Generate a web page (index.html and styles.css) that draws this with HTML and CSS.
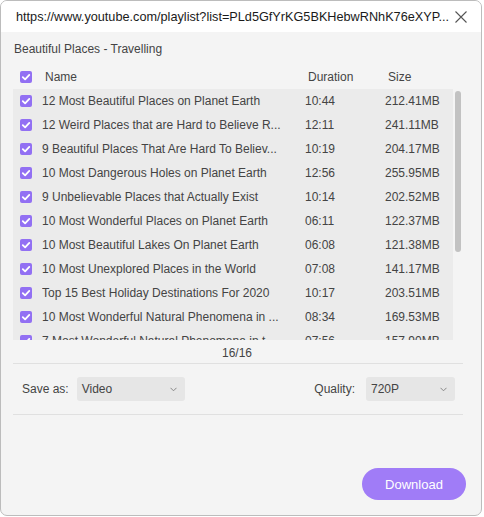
FILE: index.html
```html
<!DOCTYPE html>
<html>
<head>
<meta charset="utf-8">
<link rel="stylesheet" href="styles.css">
</head>
<body>
<div class="window">
  <div class="titlebar">
    <span class="url">https://www.youtube.com/playlist?list=PLd5GfYrKG5BKHebwRNhK76eXYP...</span>
    <svg class="close" width="12" height="12" viewBox="0 0 12 12"><path d="M0.5 0.5 L11.5 11.5 M11.5 0.5 L0.5 11.5" stroke="#555" stroke-width="1.1" fill="none"/></svg>
  </div>
  <div class="content">
    <div class="playlist-title">Beautiful Places - Travelling</div>
    <div class="row header">
      <span class="check"><svg viewBox="0 0 12 12"><path d="M2.8 6.2 L5.1 8.4 L9.3 3.9" stroke="#fff" stroke-width="1.8" fill="none" stroke-linecap="round" stroke-linejoin="round"/></svg></span>
      <span class="col-name">Name</span>
      <span class="col-dur">Duration</span>
      <span class="col-size">Size</span>
    </div>
    <div class="list-wrap">
      <div class="list">
        <div class="row"><span class="check"><svg viewBox="0 0 12 12"><path d="M2.8 6.2 L5.1 8.4 L9.3 3.9" stroke="#fff" stroke-width="1.8" fill="none" stroke-linecap="round" stroke-linejoin="round"/></svg></span><span class="name">12 Most Beautiful Places on Planet Earth</span><span>10:44</span><span>212.41MB</span></div>
        <div class="row"><span class="check"><svg viewBox="0 0 12 12"><path d="M2.8 6.2 L5.1 8.4 L9.3 3.9" stroke="#fff" stroke-width="1.8" fill="none" stroke-linecap="round" stroke-linejoin="round"/></svg></span><span class="name">12 Weird Places that are Hard to Believe R...</span><span>12:11</span><span>241.11MB</span></div>
        <div class="row"><span class="check"><svg viewBox="0 0 12 12"><path d="M2.8 6.2 L5.1 8.4 L9.3 3.9" stroke="#fff" stroke-width="1.8" fill="none" stroke-linecap="round" stroke-linejoin="round"/></svg></span><span class="name">9 Beautiful Places That Are Hard To Believ...</span><span>10:19</span><span>204.17MB</span></div>
        <div class="row"><span class="check"><svg viewBox="0 0 12 12"><path d="M2.8 6.2 L5.1 8.4 L9.3 3.9" stroke="#fff" stroke-width="1.8" fill="none" stroke-linecap="round" stroke-linejoin="round"/></svg></span><span class="name">10 Most Dangerous Holes on Planet Earth</span><span>12:56</span><span>255.95MB</span></div>
        <div class="row"><span class="check"><svg viewBox="0 0 12 12"><path d="M2.8 6.2 L5.1 8.4 L9.3 3.9" stroke="#fff" stroke-width="1.8" fill="none" stroke-linecap="round" stroke-linejoin="round"/></svg></span><span class="name">9 Unbelievable Places that Actually Exist</span><span>10:14</span><span>202.52MB</span></div>
        <div class="row"><span class="check"><svg viewBox="0 0 12 12"><path d="M2.8 6.2 L5.1 8.4 L9.3 3.9" stroke="#fff" stroke-width="1.8" fill="none" stroke-linecap="round" stroke-linejoin="round"/></svg></span><span class="name">10 Most Wonderful Places on Planet Earth</span><span>06:11</span><span>122.37MB</span></div>
        <div class="row"><span class="check"><svg viewBox="0 0 12 12"><path d="M2.8 6.2 L5.1 8.4 L9.3 3.9" stroke="#fff" stroke-width="1.8" fill="none" stroke-linecap="round" stroke-linejoin="round"/></svg></span><span class="name">10 Most Beautiful Lakes On Planet Earth</span><span>06:08</span><span>121.38MB</span></div>
        <div class="row"><span class="check"><svg viewBox="0 0 12 12"><path d="M2.8 6.2 L5.1 8.4 L9.3 3.9" stroke="#fff" stroke-width="1.8" fill="none" stroke-linecap="round" stroke-linejoin="round"/></svg></span><span class="name">10 Most Unexplored Places in the World</span><span>07:08</span><span>141.17MB</span></div>
        <div class="row"><span class="check"><svg viewBox="0 0 12 12"><path d="M2.8 6.2 L5.1 8.4 L9.3 3.9" stroke="#fff" stroke-width="1.8" fill="none" stroke-linecap="round" stroke-linejoin="round"/></svg></span><span class="name">Top 15 Best Holiday Destinations For 2020</span><span>10:17</span><span>203.51MB</span></div>
        <div class="row"><span class="check"><svg viewBox="0 0 12 12"><path d="M2.8 6.2 L5.1 8.4 L9.3 3.9" stroke="#fff" stroke-width="1.8" fill="none" stroke-linecap="round" stroke-linejoin="round"/></svg></span><span class="name">10 Most Wonderful Natural Phenomena in ...</span><span>08:34</span><span>169.53MB</span></div>
        <div class="row"><span class="check"><svg viewBox="0 0 12 12"><path d="M2.8 6.2 L5.1 8.4 L9.3 3.9" stroke="#fff" stroke-width="1.8" fill="none" stroke-linecap="round" stroke-linejoin="round"/></svg></span><span class="name">7 Most Wonderful Natural Phenomena in t...</span><span>07:56</span><span>157.90MB</span></div>
      </div>
      <div class="scroll-track"><div class="scroll-thumb"></div></div>
    </div>
    <div class="counter">16/16</div>
    <div class="options">
      <div class="opt">
        <span class="label">Save as:</span>
        <div class="select select-type"><span>Video</span><svg width="7" height="5" viewBox="0 0 7 5"><path d="M0.5 0.8 L3.5 3.8 L6.5 0.8" stroke="#888" stroke-width="1" fill="none"/></svg></div>
      </div>
      <div class="opt">
        <span class="label">Quality:</span>
        <div class="select select-quality"><span>720P</span><svg width="7" height="5" viewBox="0 0 7 5"><path d="M0.5 0.8 L3.5 3.8 L6.5 0.8" stroke="#888" stroke-width="1" fill="none"/></svg></div>
      </div>
    </div>
  </div>
  <div class="footer">
    <button class="download">Download</button>
  </div>
</div>
</body>
</html>
```

FILE: styles.css
```css
html, body {
  margin: 0;
  padding: 0;
  background: #ffffff;
}
body {
  font-family: "Liberation Sans", Arial, sans-serif;
  font-size: 12px;
  color: #444;
}
.window {
  width: 482px;
  height: 516px;
  box-sizing: border-box;
  border: 1px solid #bcbcbc;
  border-radius: 7px;
  overflow: hidden;
  background: #f4f4f4;
  display: flex;
  flex-direction: column;
}
.titlebar {
  height: 31px;
  flex: none;
  background: #ffffff;
  display: flex;
  align-items: center;
  justify-content: space-between;
  padding: 0 14px 0 15px;
}
.url {
  font-size: 12.7px;
  color: #1a1a1a;
  white-space: nowrap;
  overflow: hidden;
  min-width: 0;
}
.close {
  display: block;
  flex: none;
  margin-top: 1px;
  margin-left: 6px;
}
.content {
  padding: 0 18px 0 12px;
}
.playlist-title {
  margin-top: 9px;
  line-height: 16px;
  padding-left: 1px;
  color: #444;
}
.row {
  display: grid;
  grid-template-columns: 29px 263px 80px 1fr;
  align-items: center;
  height: 24px;
  white-space: nowrap;
  color: #444;
}
.row .check {
  margin-left: 7px;
}
.header {
  margin-top: 8px;
}
.header .col-name,
.header .col-dur,
.header .col-size {
  padding-left: 3px;
}
.check {
  width: 12px;
  height: 12px;
  border-radius: 2px;
  background: #9270f3;
  display: block;
}
.check svg {
  width: 12px;
  height: 12px;
  display: block;
}
.name {
  overflow: hidden;
}
.list-wrap {
  display: flex;
  height: 251px;
}
.list {
  flex: 1;
  background: #ebebeb;
  overflow: hidden;
}
.scroll-track {
  width: 10px;
  flex: none;
}
.scroll-thumb {
  width: 6px;
  height: 161px;
  margin: 2px 0 0 2px;
  border-radius: 3px;
  background: #c2c2c2;
}
.counter {
  text-align: center;
  line-height: 20px;
  padding-top: 3px;
  padding-right: 2px;
  border-bottom: 1px solid #e0e0e0;
  color: #444;
}
.options {
  display: flex;
  justify-content: space-between;
  align-items: center;
  padding: 13px 8px 13px 9px;
  border-bottom: 1px solid #e0e0e0;
}
.opt {
  display: flex;
  align-items: center;
}
.label {
  color: #444;
}
.select {
  height: 24px;
  box-sizing: border-box;
  background: #e6e6e6;
  border-radius: 3px;
  display: flex;
  align-items: center;
  justify-content: space-between;
  padding: 0 8px 0 5px;
  color: #444;
}
.select-type {
  width: 108px;
  margin-left: 8px;
}
.select-quality {
  width: 89px;
  margin-left: 11px;
}
.footer {
  flex: 1;
  display: flex;
  align-items: flex-end;
  justify-content: flex-end;
  padding: 0 15px 15px 0;
}
.download {
  width: 104px;
  height: 32px;
  border: none;
  border-radius: 16px;
  background: #a07cf7;
  color: #ffffff;
  font-family: "Liberation Sans", Arial, sans-serif;
  font-size: 13px;
  padding: 0;
}
```
